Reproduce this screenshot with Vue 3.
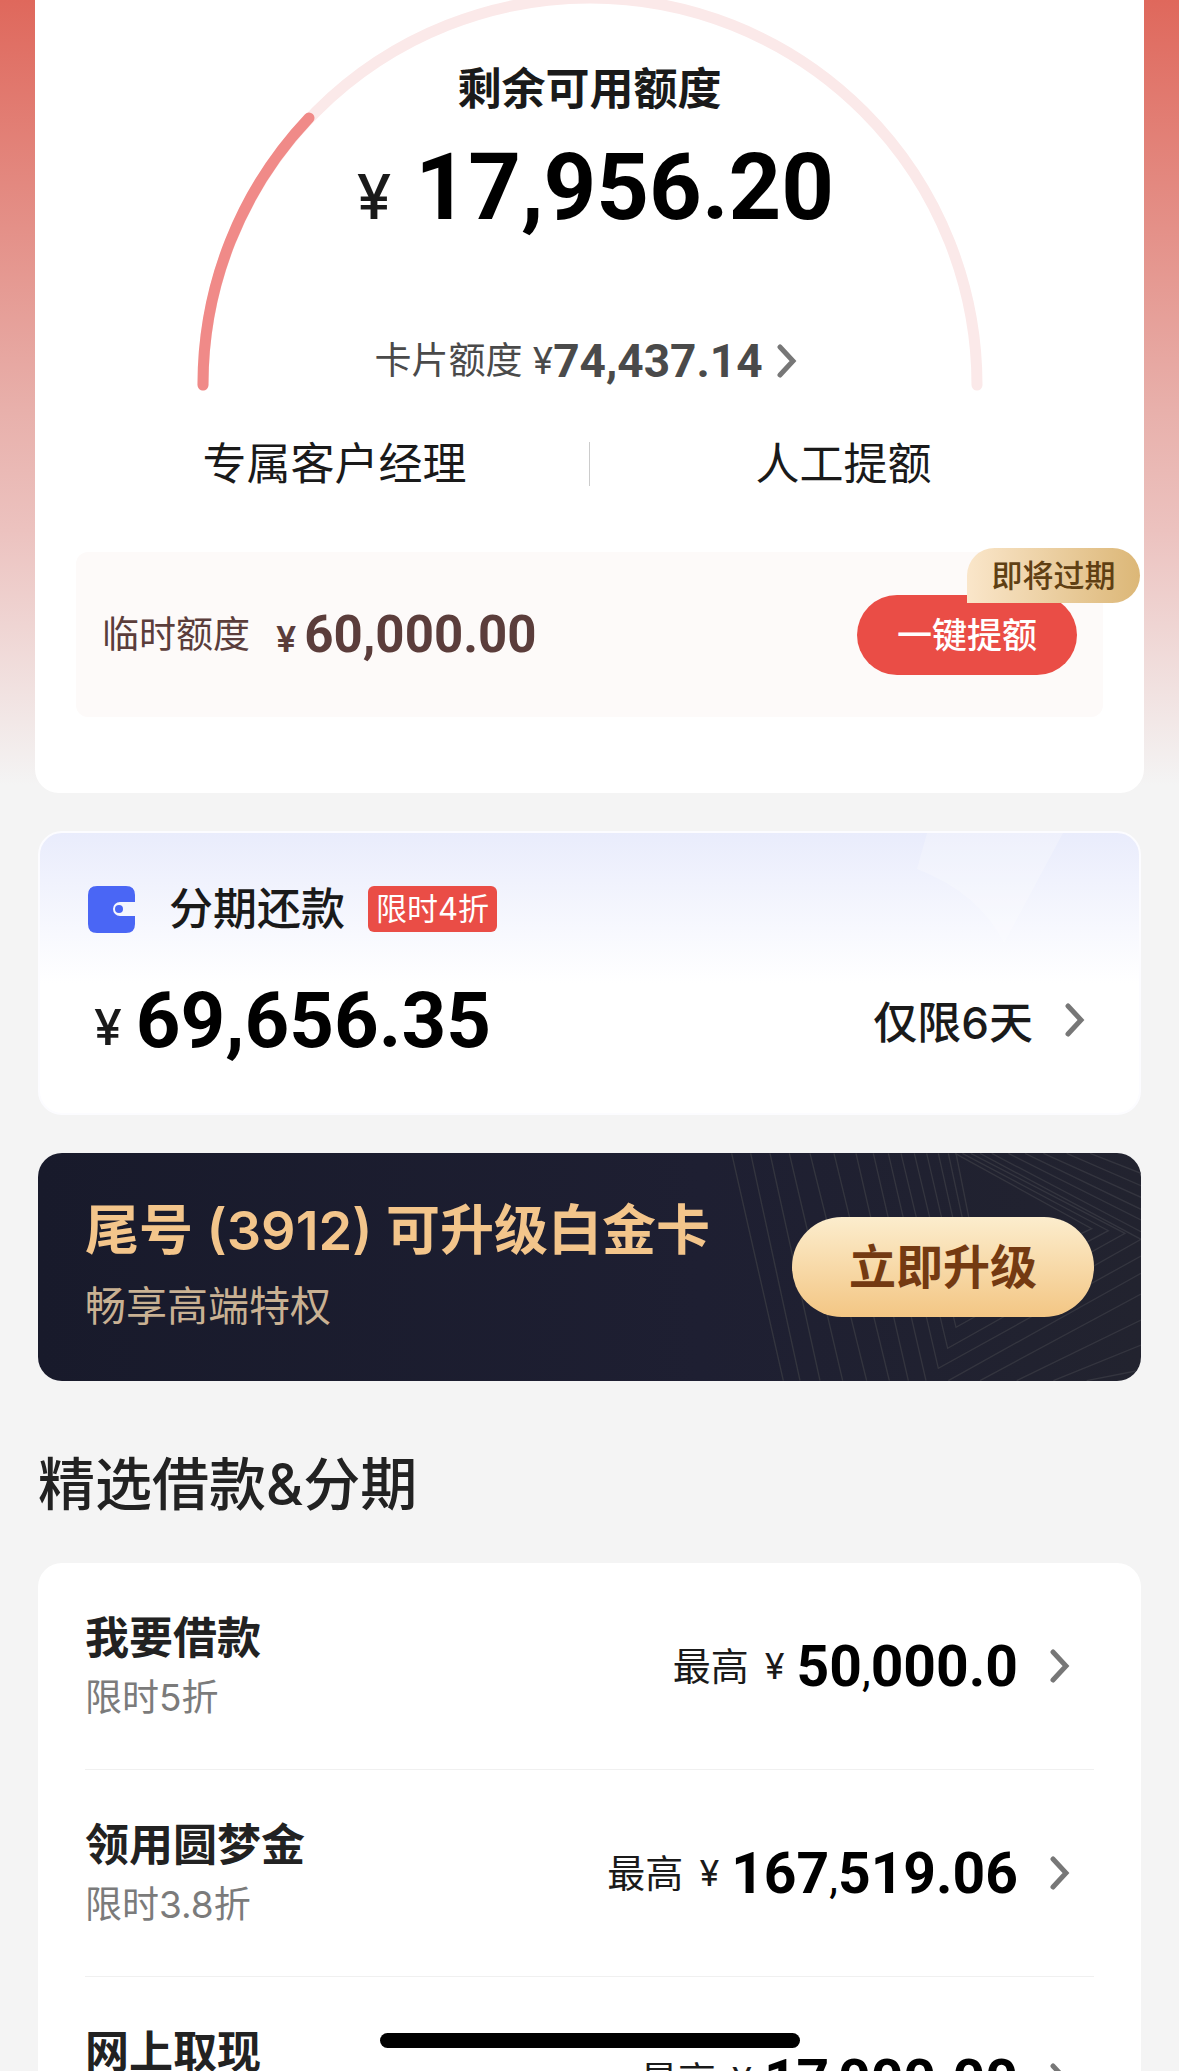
<script setup>
const loans = [
  { name: '我要借款', note: '限时5折', amount: ['50', '000.0'] },
  { name: '领用圆梦金', note: '限时3.8折', amount: ['167', '519.06'] },
  { name: '网上取现', note: '', amount: ['17', '000.00'] }
]
const patternLines = [
  'M35 40L190 722', 'M92 40L240 722', 'M150 40L300 722', 'M208 40L368 722',
  'M270 40L440 722', 'M342 40L508 722', 'M408 40L565 722', 'M460 40L618 722',
  'M505 40L655 685L1263 348', 'M543 40L683 625L1263 298L780 40',
  'M583 40L708 562L1215 280L752 40', 'M620 40L728 505L1165 272L727 40',
  'M655 40L745 440L1115 266L705 40', 'M685 40L750 340', 'M708 40L756 280',
  'M685 722L1263 400', 'M780 722L1263 462', 'M890 722L1263 540',
  'M1000 722L1263 615', 'M1100 722L1263 690',
  'M815 40L1263 275', 'M865 40L1263 240', 'M915 40L1263 208',
  'M970 40L1263 172', 'M1040 40L1263 137', 'M1110 40L1263 100'
]
</script>

<template>
  <main class="page">
    <section class="limit-card">
      <svg class="gauge" viewBox="0 0 790 392" aria-hidden="true">
        <path class="track" d="M8 385A387 387 0 0 1 782 385" />
        <path class="fill" d="M8 385A387 387 0 0 1 114 118" />
      </svg>
      <div class="limit">
        <h1 class="limit-title">剩余可用额度</h1>
        <p class="limit-amount"><span class="yen">¥</span><b>17,956.20</b></p>
        <a class="card-limit" href="#card">
          <span>卡片额度 ¥</span><b>74,437.14</b>
          <svg class="chevron" viewBox="0 0 20 34" aria-hidden="true"><path d="M3 3L16 17L3 31" /></svg>
        </a>
      </div>
      <nav class="actions">
        <a href="#manager">专属客户经理</a>
        <a href="#raise">人工提额</a>
      </nav>
      <div class="temp">
        <span class="temp-label">临时额度</span>
        <span class="temp-yen">¥</span>
        <b class="temp-amount">60,000.00</b>
        <button class="raise" type="button">一键提额</button>
        <span class="expiring">即将过期</span>
      </div>
    </section>

    <section class="repay">
      <svg class="shine" viewBox="0 0 340 150" aria-hidden="true">
        <path d="M128 0H264L205 110Q180 60 118 36Z" />
      </svg>
      <div class="repay-head">
        <svg class="wallet" viewBox="0 0 47 47" aria-hidden="true">
          <path d="M9 0H38Q47 0 47 9V16H32A7 7 0 0 0 32 30H47V38Q47 47 38 47H9Q0 47 0 38V9Q0 0 9 0Z" />
          <circle cx="31" cy="23" r="4" />
        </svg>
        <h2>分期还款</h2>
        <span class="discount">限时4折</span>
      </div>
      <a class="repay-body" href="#repay">
        <span class="repay-yen">¥</span><b>69,656.35</b>
        <span class="days">仅限6天</span>
        <svg class="chevron" viewBox="0 0 20 34" aria-hidden="true"><path d="M3 3L16 17L3 31" /></svg>
      </a>
    </section>

    <section class="upgrade">
      <svg class="pattern" viewBox="3 39 1260 684" aria-hidden="true">
        <path v-for="line in patternLines" :key="line" :d="line" />
      </svg>
      <div class="upgrade-text">
        <h2>尾号 (3912) 可升级白金卡</h2>
        <p>畅享高端特权</p>
      </div>
      <button class="upgrade-btn" type="button">立即升级</button>
    </section>

    <h2 class="section-title">精选借款&amp;分期</h2>

    <ul class="loans">
      <li v-for="loan in loans" :key="loan.name">
        <a class="loan" href="#loan">
          <span class="loan-text">
            <strong>{{ loan.name }}</strong>
            <small v-if="loan.note">{{ loan.note }}</small>
          </span>
          <span class="max">最高</span>
          <span class="max-yen">¥</span>
          <b class="loan-amount">{{ loan.amount[0] }}<i>,</i>{{ loan.amount[1] }}</b>
          <svg class="chevron" viewBox="0 0 20 34" aria-hidden="true"><path d="M3 3L16 17L3 31" /></svg>
        </a>
      </li>
    </ul>
    <div class="home-bar"></div>
  </main>
</template>

<style>
body {
  margin: 0;
  background: #f4f4f4;
}
</style>

<style scoped>
.page {
  position: relative;
  height: 100vh;
  overflow: hidden;
  box-sizing: border-box;
  padding: 0 38px;
  background: linear-gradient(#df685c 0, #e8b0ab 410px, #ecc2bf 530px, #f4f4f4 785px);
  font-family: Inter, "Noto Sans CJK SC", sans-serif;
  color: #1a1a1a;
}
h1, h2, p, ul { margin: 0; padding: 0; }
ul { list-style: none; }
a { color: inherit; text-decoration: none; }
b { font-family: Roboto, sans-serif; font-weight: 700; }
button { border: 0; padding: 0; font-family: inherit; }
.chevron {
  width: 20px;
  height: 34px;
  flex: none;
  fill: none;
  stroke: #777;
  stroke-width: 5;
  stroke-linecap: round;
}
.limit-card {
  position: relative;
  margin: 0 -3px;
  padding: 0 41px 76px;
  background: #fff;
  border-radius: 0 0 24px 24px;
}
.gauge {
  position: absolute;
  top: 0;
  left: 50%;
  width: 790px;
  margin-left: -395px;
  overflow: visible;
  fill: none;
  stroke-width: 11;
  stroke-linecap: round;
}
.track { stroke: #fbe9e9; }
.fill { stroke: #f08a88; }
.limit {
  position: relative;
  display: flex;
  flex-direction: column;
  align-items: center;
  padding-top: 57px;
}
.limit-title { font-size: 44px; line-height: 64px; font-weight: 700; }
.limit-amount {
  display: flex;
  align-items: baseline;
  gap: 24px;
  margin-top: 12px;
  padding-left: 12px;
  font-size: 92px;
  line-height: 110px;
  color: #000;
}
.yen { font-size: 62px; line-height: 64px; font-weight: 500; color: #1a1a1a; }
.card-limit {
  display: flex;
  align-items: center;
  margin: 88px 8px 0 0;
  height: 60px;
  font-size: 37px;
  line-height: 60px;
  color: #4a4a4a;
}
.card-limit b { font-size: 46px; }
.card-limit .chevron { margin-left: 14px; }
.actions {
  display: flex;
  margin: 41px 5px 0 4px;
  font-size: 44px;
  line-height: 64px;
  text-align: center;
}
.actions a { flex: 1; position: relative; }
.actions a + a::before {
  content: "";
  position: absolute;
  left: 0;
  top: 10px;
  width: 1px;
  height: 44px;
  background: #ccc;
}
.temp {
  position: relative;
  display: flex;
  align-items: center;
  height: 165px;
  margin-top: 56px;
  padding: 0 26px;
  box-sizing: border-box;
  background: #fdfaf9;
  border-radius: 12px;
  color: #5b3d3b;
}
.temp-label { font-size: 37px; line-height: 60px; }
.temp-yen { margin: 8px 8px 0 26px; font-size: 36px; font-weight: 600; }
.temp-amount { font-size: 51px; }
.raise {
  width: 220px;
  height: 80px;
  margin-left: auto;
  border-radius: 40px;
  background: #ea4d46;
  color: #fff;
  font-size: 35px;
  line-height: 78px;
  font-weight: 500;
}
.expiring {
  position: absolute;
  top: -4px;
  right: -37px;
  width: 173px;
  border-radius: 28px 28px 28px 0;
  background: linear-gradient(90deg, #fae6ca, #dcb777);
  color: #5f3f13;
  font-size: 31px;
  line-height: 55px;
  font-weight: 500;
  text-align: center;
}
.repay {
  position: relative;
  margin-top: 38px;
  height: 284px;
  box-sizing: border-box;
  padding: 44px 48px 0;
  border: 2px solid #fcfcff;
  border-radius: 24px;
  background: linear-gradient(#e9ecfc, #fff 150px);
}
.shine { position: absolute; top: 0; right: 0; width: 340px; height: 150px; fill: #fff; opacity: .25; }
.repay-head { display: flex; align-items: center; height: 64px; }
.wallet { width: 47px; height: 47px; fill: #4a66f5; }
.repay-head h2 { margin-left: 34px; font-size: 44px; line-height: 66px; font-weight: 500; }
.discount {
  margin-left: 23px;
  padding: 0 8px;
  border-radius: 6px;
  background: #ea4d46;
  color: #fff;
  font-size: 31px;
  line-height: 46px;
}
.repay-body { display: flex; align-items: center; height: 90px; margin-top: 34px; color: #1a1a1a; }
.repay-yen { margin: 14px 14px 0 6px; font-size: 50px; font-weight: 500; }
.repay-body b { font-size: 78px; color: #000; }
.days { margin-left: auto; font-size: 44px; font-weight: 500; }
.repay-body .chevron { margin: 0 6px 0 32px; }
.upgrade {
  position: relative;
  display: flex;
  justify-content: space-between;
  align-items: center;
  height: 228px;
  margin-top: 38px;
  padding: 0 47px;
  overflow: hidden;
  border-radius: 24px;
  background: linear-gradient(90deg, #181a2b, #1e1f32 60%, #22232f);
}
.pattern { position: absolute; top: 0; right: 0; width: 420px; height: 228px; fill: none; stroke: #34353f; stroke-width: 4; }
.upgrade-text { position: relative; padding-bottom: 4px; }
.upgrade-text h2 { font-size: 54px; line-height: 78px; font-weight: 600; color: #f3c58b; }
.upgrade-text p { margin-top: 4px; font-size: 41px; line-height: 64px; color: #c9b193; }
.upgrade-btn {
  position: relative;
  width: 302px;
  height: 100px;
  border-radius: 50px;
  background: linear-gradient(#fcedcd, #f3c684);
  color: #743a12;
  font-size: 47px;
  line-height: 98px;
  font-weight: 700;
}
.section-title { margin-top: 64px; font-size: 57px; line-height: 80px; font-weight: 500; color: #222; }
.loans {
  margin-top: 38px;
  padding: 0 47px;
  border-radius: 24px;
  background: #fff;
}
.loan {
  display: flex;
  align-items: center;
  height: 206px;
  border-bottom: 1px solid #f0f0f0;
}
.loan-text { display: flex; flex-direction: column; min-height: 120px; margin-right: auto; }
.loan-text strong { font-size: 44px; line-height: 64px; color: #222; }
.loan-text small { font-size: 37px; line-height: 56px; color: #7b7b7b; }
.max { font-size: 38px; line-height: 60px; }
.max-yen { margin: 0 12px 0 16px; font-size: 36px; }
.loan-amount { font-size: 57px; color: #000; }
.loan-amount i { font-size: 44px; font-weight: 400; font-style: normal; }
.loan .chevron { margin: 0 24px 0 32px; }
.home-bar {
  position: fixed;
  bottom: 23px;
  left: 50%;
  width: 420px;
  height: 15px;
  margin-left: -210px;
  border-radius: 8px;
  background: #000;
}
</style>
